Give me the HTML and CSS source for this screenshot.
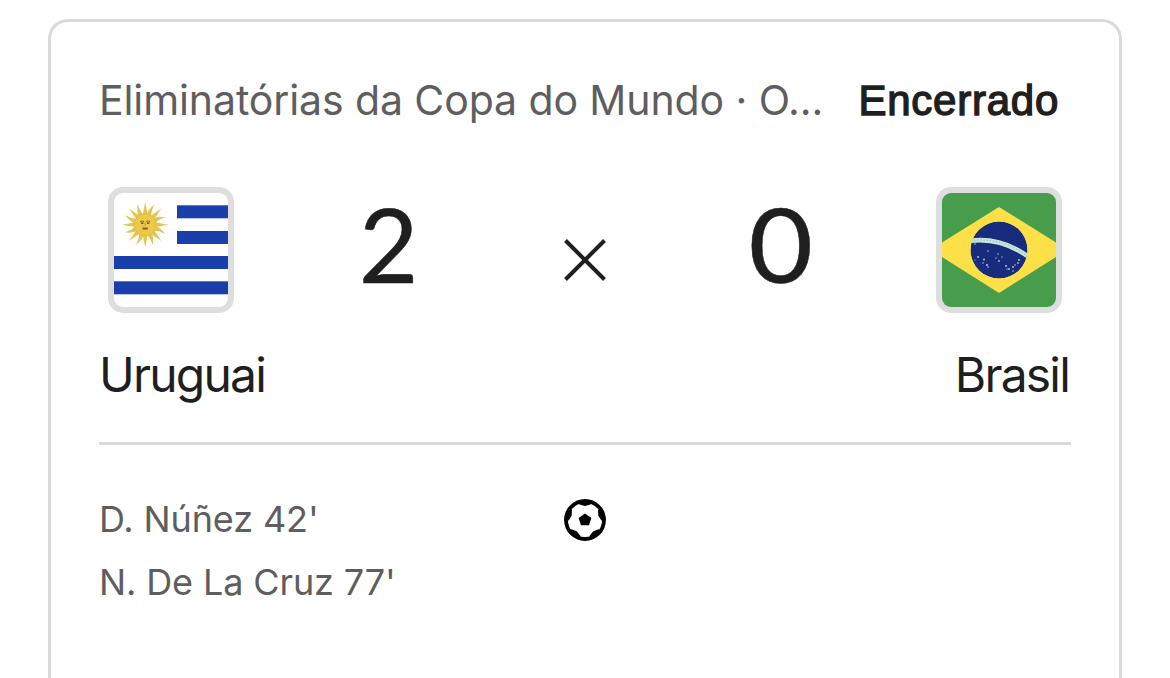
FILE: index.html
```html
<!DOCTYPE html>
<html lang="pt-BR">
<head>
  <meta charset="UTF-8"/>
  <meta name="viewport" content="width=device-width,initial-scale=1.0"/>
  <title>Uruguai 2 × 0 Brasil</title>
  <link rel="stylesheet" href="styles.css">
</head>
<body>
  <div class="card">
    <div class="header">
      <div class="league">Eliminatórias da Copa do Mundo · O...</div>
      <div class="status">Encerrado</div>
    </div>

    <div class="match">
      <div class="flag">
        <svg viewBox="0 0 114 114">
          <rect width="114" height="114" fill="#fff"/>
          <g fill="#1b3faa">
            <rect x="63" y="12.3" width="51" height="13"/>
            <rect x="63" y="38" width="51" height="13"/>
            <rect y="63" width="114" height="13"/>
            <rect y="88.3" width="114" height="13"/>
          </g>
          <g transform="translate(31.2 31.7)">
            <g id="rays" fill="#e6c450"></g>
            <circle r="11" fill="#ecc948" stroke="#dcb646" stroke-width=".7"/>
            <path d="M-5-3q2-1.5 4 0M1-3q2-1.5 4 0" fill="none" stroke="#8d6f28" stroke-width="1"/>
            <path d="M-4.2-1.5h2.4M1.8-1.5h2.4M-2.6 3.8h5.2" stroke="#7d6120" stroke-width="1.8"/>
            <path d="M0-2v3.2" stroke="#b58c2c" stroke-width=".9"/>
          </g>
        </svg>
      </div>
      <div class="score home">2</div>
      <svg class="versus" viewBox="0 0 42 42"><path d="M1.5 1.5L40.5 40.5M40.5 1.5L1.5 40.5"/></svg>
      <div class="score away">0</div>
      <div class="flag">
        <svg viewBox="0 0 114 114">
          <rect width="114" height="114" fill="#489d4c"/>
          <path d="M57 14L125.5 56.7L57 100L-11.5 56.7z" fill="#fde047"/>
          <clipPath id="globe"><circle cx="57" cy="57" r="28.5"/></clipPath>
          <g clip-path="url(#globe)">
            <circle cx="57" cy="57" r="28.5" fill="#182c7d"/>
            <path d="M26 48Q59 43 88 65" fill="none" stroke="#c9e5e0" stroke-width="4.6"/>
            <path d="M32 47.5Q59 44.5 84 62" fill="none" stroke="#9dcbb9" stroke-width="1.4" stroke-dasharray="1.6 1.5"/>
          </g>
          <g id="stars" fill="#b3bddd"></g>
        </svg>
      </div>
    </div>

    <div class="teams">
      <span>Uruguai</span>
      <span>Brasil</span>
    </div>

    <div class="goals">
      <div class="scorers">
        <div>D. Núñez 42'</div>
        <div>N. De La Cruz 77'</div>
      </div>
      <svg class="ball" viewBox="0 0 42 42">
        <clipPath id="ballClip"><circle cx="21" cy="21" r="20.5"/></clipPath>
        <g clip-path="url(#ballClip)">
          <path d="M14 1H28L26.5 5.5L21 7L15.5 5.5z"/>
          <path d="M14 1H28L26.5 5.5L21 7L15.5 5.5z" transform="rotate(72 21 21)"/>
          <path d="M14 1H28L26.5 5.5L21 7L15.5 5.5z" transform="rotate(144 21 21)"/>
          <path d="M14 1H28L26.5 5.5L21 7L15.5 5.5z" transform="rotate(216 21 21)"/>
          <path d="M14 1H28L26.5 5.5L21 7L15.5 5.5z" transform="rotate(288 21 21)"/>
        </g>
        <circle cx="21" cy="21" r="19" fill="none" stroke="#000" stroke-width="3.8"/>
        <path d="M21 14.5L27.4 19L25 26.3H17L14.6 19z"/>
      </svg>
    </div>
  </div>

  <script src="flags.js"></script>
</body>
</html>
```
FILE: styles.css
```css
* { box-sizing:border-box; }
body { margin:0; background:#fff; color:#1f1f1f; font-family:Inter, "Liberation Sans", sans-serif; }
.card { margin:19px 48px 0; height:659px; padding:48px 48px 0; border:3px solid #dadada; border-bottom:none; border-radius:20px 20px 0 0; }
.header { display:flex; justify-content:space-between; align-items:baseline; height:64px; line-height:61px; padding-right:12px; white-space:nowrap; }
.league { font-size:41px; letter-spacing:-0.1px; color:#5e5e5e; }
.status { font-family:"Liberation Sans", Arial, sans-serif; font-size:42px; -webkit-text-stroke:1.4px #1f1f1f; letter-spacing:0.75px; }
.match { display:grid; grid-template-columns:126px 1fr 42px 1fr 126px; align-items:center; height:126px; margin:53px 9px 0; }
.flag { width:126px; height:126px; background:#dedede; border:6px solid #dedede; border-radius:15px; }
.flag svg { display:block; width:114px; height:114px; border-radius:9px; }
.score { font-family:Lato, sans-serif; font-size:103px; line-height:112px; padding-bottom:14px; text-align:center; -webkit-text-stroke:0.5px #1f1f1f; }
.home { padding-right:21px; }
.away { padding-left:18px; transform:scaleX(1.08); }
.versus { width:42px; height:42px; margin-top:20px; }
.versus path { stroke:#1f1f1f; stroke-width:4; }
.teams { display:flex; justify-content:space-between; height:132px; padding:32px 2px 0 0; line-height:60px; font-size:48px; letter-spacing:-1.8px; border-bottom:3px solid #dadada; }
.goals { display:grid; grid-template-columns:1fr 42px 1fr; padding-top:43px; }
.scorers { font-size:36px; line-height:63px; letter-spacing:-0.12px; color:#5e5e5e; white-space:nowrap; }
.ball { width:42px; height:42px; margin-top:11px; }
```
FILE: flags.js
```js
const NS = "http://www.w3.org/2000/svg";

// raios do sol
const rays = document.getElementById("rays");
for (let i = 0; i < 16; i++) {
  const ray = document.createElementNS(NS, "path");
  ray.setAttribute("d", i % 2 ? "M-2.6-9Q-3.5-15 1-22Q0-15 2.6-9z" : "M-2.6-9L0-23L2.6-9z");
  ray.setAttribute("transform", `rotate(${i * 22.5})`);
  rays.appendChild(ray);
}

// estrelas: x, y, raio
const stars = document.getElementById("stars");
[[33,51,.8],[46,58,.8],[36,64,1],[42,66.5,1],[41,70,.8],[45,72,1.1],[46,74,.8],[56,61,.8],[54,65,.7],[60,64,.7],[57,68,.9],
 [33,67,.6],[64,73,1],[67,76,1],[65,76,.7],[71,74,1],[71,78,.8],[73,72,.8],[76,70,.9],[77,67,1]]
  .forEach(([x, y, r]) => {
    const star = document.createElementNS(NS, "circle");
    star.setAttribute("cx", x);
    star.setAttribute("cy", y);
    star.setAttribute("r", r);
    stars.appendChild(star);
  });
```
